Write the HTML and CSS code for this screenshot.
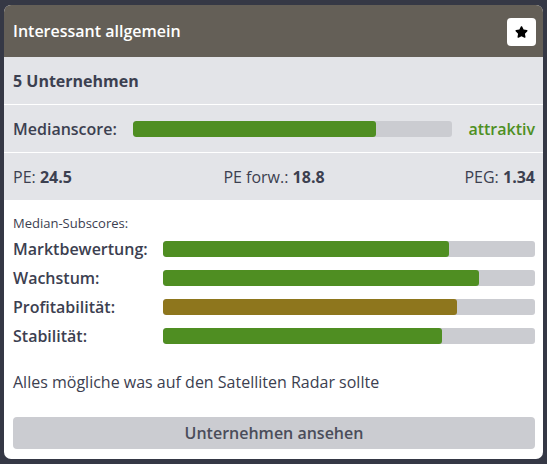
FILE: index.html
```html
<!DOCTYPE html>
<html lang="de">
<head>
<meta charset="utf-8">
<title>Interessant allgemein</title>
<link rel="stylesheet" href="styles.css">
</head>
<body>
<div class="card">
  <div class="card-header">
    <span class="title">Interessant allgemein</span>
    <button class="star-btn" aria-label="Favorit">
      <svg viewBox="0 0 576 512" width="13" height="12"><path d="M259.3 17.8L194 150.2 47.9 171.5c-26.2 3.8-36.7 36.1-17.7 54.6l105.7 103-25 145.5c-4.5 26.300 23.2 46 46.4 33.7L288 439.6l130.7 68.7c23.2 12.2 50.9-7.4 46.4-33.7l-25-145.5 105.7-103c19-18.5 8.5-50.8-17.7-54.6L382 150.2 316.7 17.8c-11.7-23.6-45.6-23.9-57.4 0z" fill="#000"/></svg>
    </button>
  </div>
  <div class="section count">5 Unternehmen</div>
  <div class="section median">
    <span class="median-label">Medianscore:</span>
    <div class="bar median-bar"><div class="fill green" style="width:76%"></div></div>
    <span class="rating">attraktiv</span>
  </div>
  <div class="section pe">
    <span class="pe-left">PE: <b>24.5</b></span>
    <span class="pe-mid">PE forw.: <b>18.8</b></span>
    <span class="pe-right">PEG: <b>1.34</b></span>
  </div>
  <div class="body">
    <div class="subtitle">Median-Subscores:</div>
    <div class="scores">
      <span class="score-label">Marktbewertung:</span>
      <div class="bar"><div class="fill green" style="width:77%"></div></div>
      <span class="score-label">Wachstum:</span>
      <div class="bar"><div class="fill green" style="width:85%"></div></div>
      <span class="score-label">Profitabilität:</span>
      <div class="bar"><div class="fill gold" style="width:79%"></div></div>
      <span class="score-label">Stabilität:</span>
      <div class="bar"><div class="fill green" style="width:75%"></div></div>
    </div>
    <p class="desc">Alles mögliche was auf den Satelliten Radar sollte</p>
    <button class="action">Unternehmen ansehen</button>
  </div>
</div>
</body>
</html>
```
FILE: styles.css
```css
* { box-sizing: border-box; }
html, body { margin: 0; }
body {
  background: #353845;
  padding: 5px 4px;
  font-family: "Open Sans", "Noto Sans", sans-serif;
  color: #3c4050;
}
.card {
  width: 539px;
  height: 454px;
  background: #fff;
  border-radius: 7px;
  overflow: hidden;
  display: flex;
  flex-direction: column;
}
.card-header {
  height: 52px;
  background: #645f57;
  display: flex;
  align-items: center;
  justify-content: space-between;
  padding: 0 7px 0 9px;
}
.title {
  color: #fff;
  font-size: 16px;
  font-weight: 600;
}
.star-btn {
  width: 29px;
  height: 28px;
  border: 0;
  border-radius: 4px;
  background: #fff;
  padding: 0;
  display: flex;
  align-items: center;
  justify-content: center;
  margin-top: 2px;
}
.section {
  background: #e3e4e8;
  padding: 0 8px 0 9px;
  display: flex;
  align-items: center;
  font-size: 16px;
}
.count {
  height: 48px;
  font-weight: 700;
  border-bottom: 1px solid #fff;
}
.median {
  height: 48px;
  border-bottom: 1px solid #fff;
}
.median-label {
  width: 120px;
  font-weight: 600;
}
.median-bar {
  flex: 1;
  margin-right: 16px;
}
.rating {
  color: #4e8f23;
  font-weight: 600;
}
.pe {
  height: 47px;
  display: grid;
  grid-template-columns: 1fr 1fr 1fr;
}
.pe-mid { text-align: center; }
.pe-right { text-align: right; }
.pe b { font-weight: 700; }
.bar {
  height: 16px;
  background: #cbccd1;
  border-radius: 3px;
  overflow: hidden;
}
.fill { height: 100%; border-radius: 3px; }
.green { background: #4f8e22; }
.gold { background: #8e761d; }
.body {
  flex: 1;
  padding: 14px 8px 10px 9px;
  display: flex;
  flex-direction: column;
}
.subtitle {
  font-size: 13px;
  line-height: 18px;
}
.scores {
  margin-top: 9px;
  display: grid;
  grid-template-columns: 150px 1fr;
  grid-auto-rows: 16px;
  row-gap: 13px;
  align-items: center;
}
.score-label {
  font-size: 16px;
  font-weight: 600;
  line-height: 16px;
}
.desc {
  margin: 27px 0 0;
  font-size: 16px;
  line-height: 22px;
}
.action {
  margin-top: 24px;
  height: 32px;
  border: 0;
  border-radius: 4px;
  background: #cbccd1;
  color: #4a4d5a;
  font-family: inherit;
  font-size: 16px;
  font-weight: 600;
}
```
